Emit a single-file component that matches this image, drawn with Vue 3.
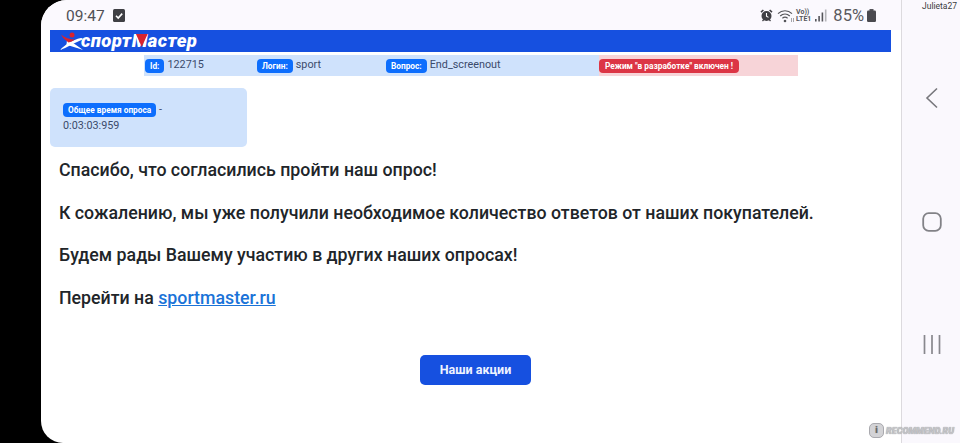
<script setup>
const infoItems = [
  { label: 'Id:', value: '122715', width: '112px' },
  { label: 'Логин:', value: 'sport', width: '129px' },
  { label: 'Вопрос:', value: 'End_screenout', width: '214px' },
]
const paragraphs = [
  'Спасибо, что согласились пройти наш опрос!',
  'К сожалению, мы уже получили необходимое количество ответов от наших покупателей.',
  'Будем рады Вашему участию в других наших опросах!',
]
</script>

<template>
  <div class="frame">
    <div class="screen">
      <div class="status">
        <div class="status-left">
          <span class="clock">09:47</span>
          <svg class="check" width="12" height="13" viewBox="0 0 12 13">
            <rect width="12" height="13" rx="1.5" fill="#3f3f44" />
            <path d="M3 6.8l2.2 2.2L9.2 4.6" fill="none" stroke="#fff" stroke-width="1.6" />
          </svg>
        </div>
        <div class="status-right">
          <svg width="13" height="13" viewBox="0 0 13 13">
            <circle cx="6.5" cy="7" r="5" fill="#3f3f44" />
            <path d="M1 3.2L3.4 1M12 3.2L9.6 1" stroke="#3f3f44" stroke-width="1.6" />
            <path d="M6.5 4v3.2l2 1.2" fill="none" stroke="#fff" stroke-width="1.1" />
            <path d="M2.5 12l1.5-1.6M10.5 12L9 10.4" stroke="#3f3f44" stroke-width="1.3" />
          </svg>
          <svg class="wifi" width="18" height="14" viewBox="0 0 18 14">
            <path d="M1 4.6C5 .8 11 .8 15 4.6M3.2 7C6 4.5 10 4.5 12.8 7M5.4 9.3C7 8 9 8 10.6 9.3" fill="none" stroke="#55555a" stroke-width="1.2" />
            <circle cx="8" cy="12" r="1.3" fill="#55555a" />
            <path d="M14.500 9v4M16.500 9v4" stroke="#a5a5aa" stroke-width="1" />
          </svg>
          <span class="volte">Vo))<br />LTE1</span>
          <svg class="bars" width="12" height="13" viewBox="0 0 12 13">
            <rect x="0" y="10" width="1.6" height="2.500" fill="#55555a" />
            <rect x="3.300" y="7" width="1.6" height="5.500" fill="#55555a" />
            <rect x="6.600" y="3.500" width="1.6" height="9" fill="#55555a" />
            <rect x="9.900" y="0.500" width="1.6" height="12" fill="#b4b4b8" />
          </svg>
          <span class="battery-text">85%</span>
          <svg class="battery" width="9" height="13" viewBox="0 0 9 13">
            <rect x="2.500" y="0" width="4" height="2" fill="#55555a" />
            <rect x="0" y="1.500" width="9" height="11.500" rx="1.200" fill="#4a4a4f" />
          </svg>
        </div>
      </div>

      <div class="brand">
        <svg class="runner" width="24" height="18" viewBox="0 0 24 18">
          <path d="M0 18C6 12 12 8 21 6C22 5.800 23.500 7 22.500 7.600C17 10 13 12 11 13C7 15 3 17 0 18Z" fill="#fff" />
          <path d="M7 8C11 9.500 18 14 23 18C17 16 12 14.500 6.500 12.500Z" fill="#fff" />
          <path d="M1 2.500C5 6 10 7.500 15 7.500C13 9 10.500 10 8.500 10.500C5 8 2.500 5.500 1 2.500Z" fill="#d8232f" />
          <circle cx="12" cy="3" r="2.500" fill="#d8232f" />
        </svg>
        <span class="brand-name">спорт<span class="brand-m">М<i class="brand-v"></i></span>астер</span>
      </div>

      <div class="info">
        <div v-for="item in infoItems" :key="item.label" class="info-cell" :style="{ width: item.width }">
          <span class="badge">{{ item.label }}</span>
          <span class="info-value">{{ item.value }}</span>
        </div>
        <div class="info-cell dev">
          <span class="badge red">Режим "в разработке" включен !</span>
        </div>
      </div>

      <div class="timer">
        <div class="timer-line"><span class="badge">Общее время опроса</span> -</div>
        <div>0:03:03:959</div>
      </div>

      <div class="message">
        <p v-for="text in paragraphs" :key="text">{{ text }}</p>
        <p>Перейти на <a class="link" href="#">sportmaster.ru</a></p>
      </div>

      <div class="actions">
        <button class="promo">Наши акции</button>
      </div>
    </div>

    <div class="nav">
      <span class="user">Julieta27</span>
      <svg class="nav-back" width="14" height="22" viewBox="0 0 14 22">
        <path d="M12 1.500L2 11l10 9.500" fill="none" stroke="#77777c" stroke-width="1.600" />
      </svg>
      <svg class="nav-home" width="20" height="20" viewBox="0 0 20 20">
        <rect x="1.200" y="1.200" width="17.600" height="17.600" rx="5.500" fill="none" stroke="#828287" stroke-width="1.800" />
      </svg>
      <svg class="nav-recent" width="20" height="19" viewBox="0 0 20 19">
        <path d="M2.500 0v19M10 0v19M17.500 0v19" stroke="#88888d" stroke-width="1.700" />
      </svg>
    </div>

    <div class="watermark"><span class="wm-icon">i</span>RECOMMEND.RU</div>
  </div>
</template>

<style>
body { background: #000; }
</style>

<style scoped>
.frame {
  position: relative;
  display: flex;
  width: 960px;
  height: 443px;
  padding-left: 41px;
  box-sizing: border-box;
  overflow: hidden;
  background: #000;
  font-family: Roboto, "Noto Sans", sans-serif;
}
.screen {
  width: 860px;
  height: 443px;
  background: #fff;
  border-radius: 26px 0 0 22px;
  overflow: hidden;
  flex-shrink: 0;
}
.status {
  display: flex;
  justify-content: space-between;
  align-items: center;
  height: 30px;
  padding: 1px 25px 0 25px;
  box-sizing: border-box;
  background: #fbf9fe;
}
.status-left, .status-right { display: flex; align-items: center; }
.clock { font-size: 15.500px; color: #505055; }
.check { margin-left: 8px; }
.status-right svg { flex-shrink: 0; }
.wifi { margin-left: 4px; }
.volte {
  margin: 0 4px 0 1px;
  font-size: 7px;
  line-height: 7px;
  font-weight: 700;
  color: #55555a;
}
.battery-text { margin: 0 3px 0 6px; font-size: 16.500px; color: #5a5a5f; }
.brand {
  display: flex;
  align-items: center;
  height: 22px;
  margin: 0 10px 0 9px;
  padding-left: 10px;
  background: #1650e0;
}
.runner { margin-right: -3px; }
.brand-name {
  font-size: 18.500px;
  font-weight: 900;
  font-style: italic;
  letter-spacing: 0.4px;
  color: #fff;
}
.brand-m { position: relative; }
.brand-v {
  position: absolute;
  left: 3px;
  top: 4px;
  width: 13px;
  height: 13px;
  background: #d8232f;
  clip-path: polygon(10% 0, 100% 0, 55% 100%);
}
.info {
  display: flex;
  width: 654px;
  height: 21px;
  margin: 3px 0 0 103px;
  background: #cfe2fc;
}
.info-cell {
  display: flex;
  align-items: center;
  flex-shrink: 0;
  padding-left: 1px;
  box-sizing: border-box;
}
.info-cell.dev {
  flex: 1;
  background: #f7d4d8;
  padding-left: 0;
}
.info-value { margin-left: 3px; font-size: 10.800px; color: #3b4a6b; position: relative; top: -1px; }
.badge {
  display: inline-block;
  padding: 0 5px;
  height: 14px;
  line-height: 14px;
  border-radius: 4px;
  background: #0d6efd;
  color: #fff;
  font-size: 8.300px;
  font-weight: 700;
  white-space: nowrap;
}
.badge.red { background: #dc3545; padding: 0 6px; }
.timer {
  width: 197px;
  height: 59px;
  margin: 12px 0 0 9px;
  padding: 14px 13px 0;
  box-sizing: border-box;
  border-radius: 5px;
  background: #cfe2fc;
  color: #3b4a6b;
  font-size: 10.800px;
  line-height: 16px;
}
.timer-line { white-space: nowrap; }
.message {
  margin: 12px 0 0 18px;
  font-size: 17.760px;
  font-weight: 500;
  color: #212529;
  line-height: 22px;
}
.message p { margin: 0 0 20.670px; }
.link { color: #1a73d8; text-decoration: underline; }
.actions {
  display: flex;
  margin: 46px 0 0 379px;
}
.promo {
  width: 111px;
  height: 30px;
  border: none;
  border-radius: 5px;
  background: #1650e0;
  color: #eef3ff;
  font-family: inherit;
  font-size: 12.500px;
  font-weight: 700;
}
.nav {
  display: flex;
  flex-direction: column;
  align-items: center;
  width: 59px;
  height: 443px;
  padding-left: 2px;
  background: #faf8fd;
  border-left: 1px solid #dcdade;
  box-sizing: border-box;
}
.user {
  align-self: flex-end;
  margin: 0 3px 0 0;
  font-size: 8.500px;
  line-height: 12px;
  color: #3c3c40;
}
.nav-back { margin-top: 75px; }
.nav-home { margin-top: 103px; }
.nav-recent { margin-top: 103px; }
.watermark {
  position: absolute;
  right: 6px;
  bottom: 5px;
  display: flex;
  align-items: center;
  font-size: 9px;
  font-weight: 900;
  font-style: italic;
  color: #c4c4c8;
  text-shadow: 0 0 1px #8a8a90;
}
.wm-icon {
  display: inline-block;
  width: 15px;
  height: 15px;
  margin-right: 2px;
  border-radius: 5px;
  background: #d3d3d6;
  border: 1px solid #a9a9ae;
  box-sizing: border-box;
  color: #666;
  text-align: center;
  line-height: 13px;
  font-style: normal;
}
</style>
